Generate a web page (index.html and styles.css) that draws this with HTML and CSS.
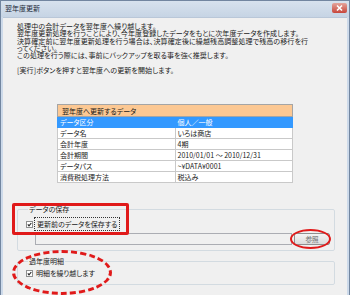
FILE: index.html
```html
<!DOCTYPE html>
<html lang="ja">
<head>
  <meta charset="UTF-8">
  <title>翌年度更新</title>
  <link rel="stylesheet" href="styles.css">
</head>
<body>

<div class="window">
  <!-- TITLE BAR -->
  <div class="titlebar">
    <span class="title">翌年度更新</span>
    <span class="close">
      <svg width="15" height="10" viewBox="0 0 15 10">
        <path d="M5 2.5 L10 7.5 M10 2.5 L5 7.5" stroke="#fff" stroke-width="1.6" />
      </svg>
    </span>
  </div>

  <div class="client">
    <p class="intro">
      処理中の会計データを翌年度へ繰り越します。<br>
      翌年度更新処理を行うことにより、今年度登録したデータをもとに次年度データを作成します。<br>
      決算確定前に翌年度更新処理を行う場合は、決算確定後に繰越残高調整処理で残高の移行を行<br>
      ってください。<br>
      この処理を行う際には、事前にバックアップを取る事を強く推奨します。<br>
      <br>
      [実行]ボタンを押すと翌年度への更新を開始します。
    </p>

    <!-- DATA TABLE -->
    <table class="data">
      <tr><th colspan="2">翌年度へ更新するデータ</th></tr>
      <tr class="selected"><td>データ区分</td><td>個人／一般</td></tr>
      <tr><td>データ名</td><td>いろは商店</td></tr>
      <tr><td>会計年度</td><td>4期</td></tr>
      <tr><td>会計期間</td><td>2010/01/01 ～ 2010/12/31</td></tr>
      <tr><td>データパス</td><td>~¥DATA¥0001</td></tr>
      <tr><td>消費税処理方法</td><td>税込み</td></tr>
    </table>

    <!-- SAVE GROUP -->
    <fieldset class="group save">
      <legend>データの保存</legend>
      <div class="check-row">
        <span class="box">
          <svg width="7" height="7" viewBox="0 0 7 7">
            <rect x="0.5" y="0.5" width="6" height="6" fill="#fff" stroke="#8e8f8f" />
            <path d="M1.8 3.4 L3 4.8 L5.3 2" fill="none" stroke="#222" stroke-width="1.1" />
          </svg>
        </span>
        <span class="focus">更新前のデータを保存する</span>
      </div>
      <div class="path-row">
        <input class="path" type="text" disabled>
        <button class="browse">参照</button>
      </div>
    </fieldset>

    <!-- CARRY GROUP -->
    <fieldset class="group carry">
      <legend>過年度明細</legend>
      <div class="check-row">
        <span class="box">
          <svg width="7" height="7" viewBox="0 0 7 7">
            <rect x="0.5" y="0.5" width="6" height="6" fill="#fff" stroke="#8e8f8f" />
            <path d="M1.8 3.4 L3 4.8 L5.3 2" fill="none" stroke="#222" stroke-width="1.1" />
          </svg>
        </span>
        <span>明細を繰り越します</span>
      </div>
    </fieldset>
  </div>

  <!-- red annotations over the dialog -->
  <div class="mark mark-rect"></div>
  <div class="mark mark-oval"></div>
  <div class="mark mark-dash"></div>
</div>

</body>
</html>
```

FILE: styles.css
```css
body {
  margin: 0;
  background: #fff;
  font-family: "Noto Sans CJK JP", "DejaVu Sans", sans-serif;
  font-size: 7px;
  color: #1a1a1a;
  font-feature-settings: "palt";
}
.window {
  position: relative;
  width: 350px;
  height: 295px;
  box-sizing: border-box;
  border: 1px solid #7286a0;
  border-bottom: none;
  background: #cddaea;
  overflow: hidden;
}
.titlebar {
  display: flex;
  justify-content: space-between;
  align-items: flex-start;
  height: 16px;
  background: linear-gradient(#d7e2ee, #c6d4e4);
}
.title {
  padding: 3px 0 0 4px;
  line-height: 9px;
  color: #1e2a3a;
}
.close {
  margin: 2px 2px 0 0;
  width: 15px;
  height: 10px;
  border-radius: 2px;
  background: linear-gradient(#e4a59c, #c7453a);
  border: 0 solid #8d3a33;
}
.close svg {
  display: block;
}
.client {
  margin: 0 2px;
  height: 278px;
  padding: 5px 11px 0 14px;
  box-sizing: border-box;
  background: #f0f0f0;
  border-top: 1px solid #b9c7d8;
}
.intro {
  margin: 0;
  line-height: 7.3px;
  white-space: nowrap;
  letter-spacing: 0.1px;
}
.data {
  margin: 30px 0 0 40px;
  width: 236px;
  border-collapse: collapse;
  table-layout: fixed;
  background: #fff;
  border: 1px solid #a5a5a5;
}
.data th {
  height: 11px;
  padding: 0 0 0 4px;
  text-align: left;
  font-weight: normal;
  background: #fcc893;
  border: 1px solid #a5a5a5;
  line-height: 10px;
}
.data td {
  height: 10px;
  padding: 0 0 0 2px;
  border: 1px solid #c9c9c9;
  line-height: 10px;
  white-space: nowrap;
}
.data td:first-child {
  width: 85px;
}
.data .selected td {
  background: #3399ff;
  color: #fff;
  border-color: #3399ff;
}
.group {
  margin: 0;
  padding: 0 0 5px 8px;
  border: 1px solid #d3dbe1;
  border-radius: 2px;
  width: 318px;
  box-sizing: border-box;
}
.group legend {
  margin-left: 2px;
  padding: 0 1px;
  line-height: 8px;
}
.save {
  margin-top: 22px;
}
.carry {
  margin-top: 6px;
  padding-bottom: 6px;
}
.check-row {
  display: flex;
  align-items: center;
  gap: 3px;
  height: 10px;
  margin-top: 6px;
}
.carry .check-row {
  margin-top: 3px;
}
.box svg {
  display: block;
}
.focus {
  outline: 1px dotted #333;
  outline-offset: 1px;
  padding: 0 1px;
}
.path-row {
  display: flex;
  gap: 2px;
  margin: 4px 0 0 9px;
}
.path {
  width: 257px;
  height: 12px;
  box-sizing: border-box;
  margin: 0;
  padding: 0;
  border: 1px solid #abadb3;
  background: #f0f0f0;
}
.browse {
  width: 36px;
  height: 12px;
  margin: 0;
  padding: 0;
  font-family: inherit;
  font-size: 6.5px;
  line-height: 10px;
  color: #6d6d6d;
  border: 1px solid #8f8f8f;
  border-radius: 2px;
  background: linear-gradient(#f4f4f4, #dcdcdc);
}
.mark {
  position: absolute;
  box-sizing: border-box;
  border: 3px solid #e01a1a;
}
.mark-rect {
  left: 11px;
  top: 202px;
  width: 117px;
  height: 32px;
  border-radius: 2px;
}
.mark-oval {
  left: 289px;
  top: 228px;
  width: 41px;
  height: 20px;
  border-width: 2.5px;
  border-radius: 50%;
}
.mark-dash {
  left: 11px;
  top: 249px;
  width: 100px;
  height: 45px;
  border-style: dashed;
  border-radius: 50%;
}
```
